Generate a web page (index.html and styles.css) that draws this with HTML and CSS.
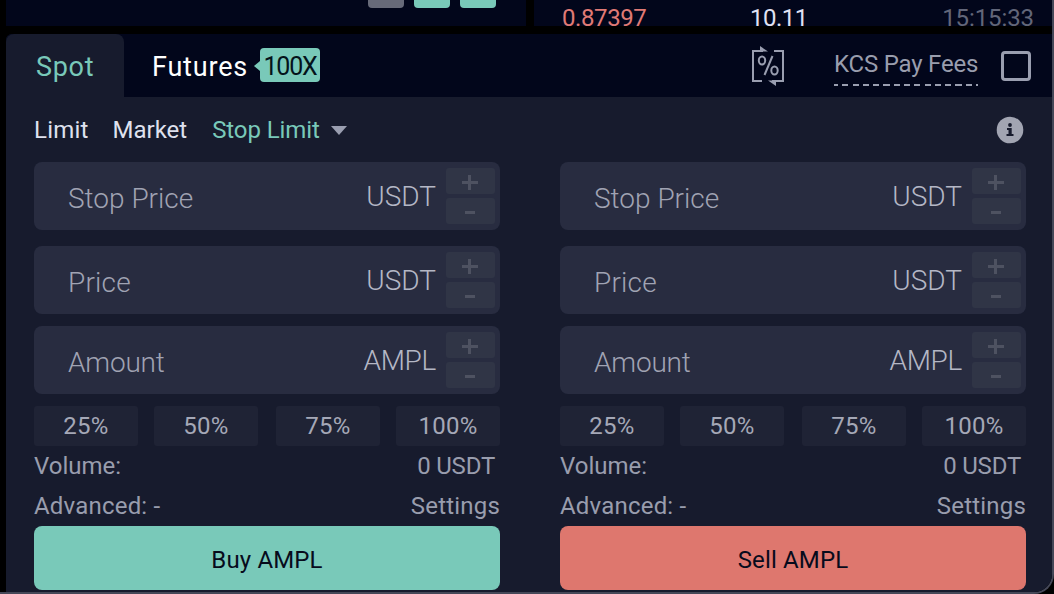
FILE: index.html
```
<!DOCTYPE html>
<html lang="en">
<head>
<meta charset="utf-8">
<title>Spot trading</title>
<link rel="stylesheet" href="styles.css">
</head>
<body>
<div class="window">
  <div class="top">
    <div class="depth"><i class="chip muted"></i><i class="chip"></i><i class="chip"></i></div>
    <div class="trades"><span class="t-price">0.87397</span><span class="t-size">10.11</span><span class="t-time">15:15:33</span></div>
  </div>
  <main class="panel">
    <header class="header">
      <div class="tab active"><span>Spot</span></div>
      <div class="futures"><span>Futures</span><b class="badge">100X</b></div>
      <svg class="fee-icon" width="34" height="42" viewBox="0 0 34 42" fill="none" stroke="#9a9eb0" stroke-width="2">
        <path d="M12 6H2v30h9M23 6h9v30H21"/>
        <path d="M9 1l8 5.500H9zM25 41l-8-5.500h8z" fill="#9a9eb0" stroke="none"/>
        <ellipse cx="11" cy="15.500" rx="3.200" ry="4"/><ellipse cx="23.500" cy="25.500" rx="3.200" ry="4"/><path d="M21.500 11l-8 19"/>
      </svg>
      <span class="kcs">KCS Pay Fees</span>
      <span class="checkbox"></span>
    </header>
    <nav class="types">
      <span class="limit">Limit</span><span class="market">Market</span><span class="stop">Stop Limit</span><i class="caret"></i>
      <svg class="info" width="28" height="28" viewBox="0 0 28 28"><circle cx="14" cy="14" r="13.300" fill="#a2a5b2"/><circle cx="14" cy="9" r="1.900" fill="#171b2d"/><path d="M11 12h4.700v6H17.500v2h-7v-2h2v-4H11z" fill="#171b2d"/></svg>
    </nav>
    <div class="forms">
      <section class="form">
        <div class="field"><span class="name stop-price">Stop Price</span><span class="unit">USDT</span><div class="steps"><i class="plus"></i><i class="minus"></i></div></div>
        <div class="field"><span class="name price">Price</span><span class="unit">USDT</span><div class="steps"><i class="plus"></i><i class="minus"></i></div></div>
        <div class="field last"><span class="name amount">Amount</span><span class="unit ampl">AMPL</span><div class="steps"><i class="plus"></i><i class="minus"></i></div></div>
        <div class="percents"><span>25%</span><span>50%</span><span>75%</span><span>100%</span></div>
        <div class="row"><span class="volume">Volume:</span><span class="total">0 USDT</span></div>
        <div class="row"><span class="advanced">Advanced: -</span><span class="settings">Settings</span></div>
        <div class="submit buy"><span>Buy AMPL</span></div>
      </section>
      <section class="form">
        <div class="field"><span class="name stop-price">Stop Price</span><span class="unit">USDT</span><div class="steps"><i class="plus"></i><i class="minus"></i></div></div>
        <div class="field"><span class="name price">Price</span><span class="unit">USDT</span><div class="steps"><i class="plus"></i><i class="minus"></i></div></div>
        <div class="field last"><span class="name amount">Amount</span><span class="unit ampl">AMPL</span><div class="steps"><i class="plus"></i><i class="minus"></i></div></div>
        <div class="percents"><span>25%</span><span>50%</span><span>75%</span><span>100%</span></div>
        <div class="row"><span class="volume">Volume:</span><span class="total">0 USDT</span></div>
        <div class="row"><span class="advanced">Advanced: -</span><span class="settings">Settings</span></div>
        <div class="submit sell"><span>Sell AMPL</span></div>
      </section>
    </div>
  </main>
</div>
</body>
</html>
```
FILE: styles.css
```
* { box-sizing: border-box; }
html, body { margin: 0; background: #000; }
body { width: 1054px; height: 594px; overflow: hidden; font: 24px/30px Roboto, sans-serif; color: #999dad; }
i { display: block; font-style: normal; }
span { white-space: nowrap; }
.window { width: 1054px; height: 594px; padding-left: 6px; border-right: 2px solid #454858; border-bottom: 2px solid #454858; border-bottom-right-radius: 20px; overflow: hidden; background: #000; }

.top { display: flex; gap: 8px; height: 26px; margin-bottom: 8px; }
.depth { width: 520px; background: #02061b; display: flex; gap: 10px; padding-left: 362px; }
.chip { width: 36px; height: 8px; border-radius: 0 0 4px 4px; background: #79c9b9; }
.chip.muted { background: #676a79; }
.trades { flex: 1; background: #02061b; display: grid; grid-template-columns: 188px 1fr auto; padding: 10px 18px 0 28px; line-height: 16px; }
.t-price { color: #e07a75; letter-spacing: -.4px; }
.t-size { color: #e0e2f4; letter-spacing: -.5px; }
.t-time { color: #626679; letter-spacing: -.1px; }

.panel { background: #171b2d; height: 558px; border-radius: 6px 0 0 0; }
.header { display: flex; align-items: center; height: 63px; background: #02061b; border-radius: 6px 0 0 0; padding-right: 21px; }
.tab { width: 118px; height: 63px; padding: 18px 0 0 30px; background: #171b2d; border-radius: 8px 8px 0 0; color: #79c9b9; font-size: 27px; letter-spacing: .7px; }
.futures { display: flex; align-items: center; margin-left: 28px; color: #fff; font-size: 27px; letter-spacing: .8px; }
.futures span { padding-top: 2px; }
.badge { position: relative; width: 60px; height: 34px; margin: -2px 0 0 12px; border-radius: 4px; background: #79c9b9; color: #04131b; font-weight: 400; font-size: 25px; line-height: 37px; letter-spacing: -1.200px; text-align: center; }
.badge::before { content: ""; position: absolute; left: -6px; top: 13px; border: 5px solid transparent; border-right: 6px solid #79c9b9; border-left: 0; }
.fee-icon { margin-left: auto; }
.kcs { margin: 0 0 0 49px; height: 41px; padding-top: 4px; width: 144px; letter-spacing: -.2px; border-bottom: 2px solid transparent; border-image: repeating-linear-gradient(90deg, #9a9eb0 0 6px, transparent 6px 10px) 2; }
.checkbox { margin-left: 23px; width: 30px; height: 30px; border: 3px solid #9a9eb0; border-radius: 4px; }

.types { display: flex; align-items: center; height: 65px; padding: 0 28px; color: #dfe1ee; }
.limit { letter-spacing: .2px; }
.market { margin-left: 24px; }
.stop { margin-left: 25px; color: #79c9b9; letter-spacing: -.1px; }
.caret { margin: 2px 0 0 11px; border: 8px solid transparent; border-top: 9px solid #9a9eb0; border-bottom: 0; }
.info { margin-left: auto; }

.forms { display: grid; grid-template-columns: 466px 466px; gap: 60px; padding-left: 28px; }
.field { display: flex; align-items: center; height: 68px; margin-bottom: 16px; padding: 0 5px 0 34px; border-radius: 8px; background: #282c40; font-size: 28px; font-weight: 300; color: #a0a3b3; }
.field:nth-child(2) { margin-bottom: 12px; }
.field.last { margin-bottom: 12px; }
.name { padding-top: 6px; }
.price { letter-spacing: .2px; }
.amount { letter-spacing: -.2px; }
.unit { margin-left: auto; padding-top: 2px; color: #b4b7c5; }
.ampl { letter-spacing: -.3px; }
.steps { margin-left: 10px; display: grid; gap: 4px; width: 49px; }
.steps i { position: relative; height: 26px; border-radius: 3px; background: #303546; }
.plus::before, .minus::before { content: ""; position: absolute; left: 16px; top: 13px; width: 16px; height: 3px; background: #4e5261; }
.plus::after { content: ""; position: absolute; left: 22px; top: 7px; width: 3px; height: 15px; background: #4e5261; }
.minus::before { left: 19px; top: 13px; width: 10px; }
.percents { display: grid; grid-template-columns: 120px 122px 120px 104px; }
.percents span { width: 104px; height: 40px; line-height: 40px; border-radius: 3px; background: #1f2335; text-align: center; color: #a5a8b7; letter-spacing: .3px; }
.row { display: flex; justify-content: space-between; height: 40px; line-height: 40px; }
.total { margin-right: 5px; letter-spacing: -.2px; }
.advanced { letter-spacing: .2px; }
.settings { letter-spacing: .2px; }
.submit { height: 64px; line-height: 68px; border-radius: 8px; text-align: center; color: #070b1c; letter-spacing: .15px; }
.buy { background: #79c9b9; }
.sell { background: #de776e; }
```
